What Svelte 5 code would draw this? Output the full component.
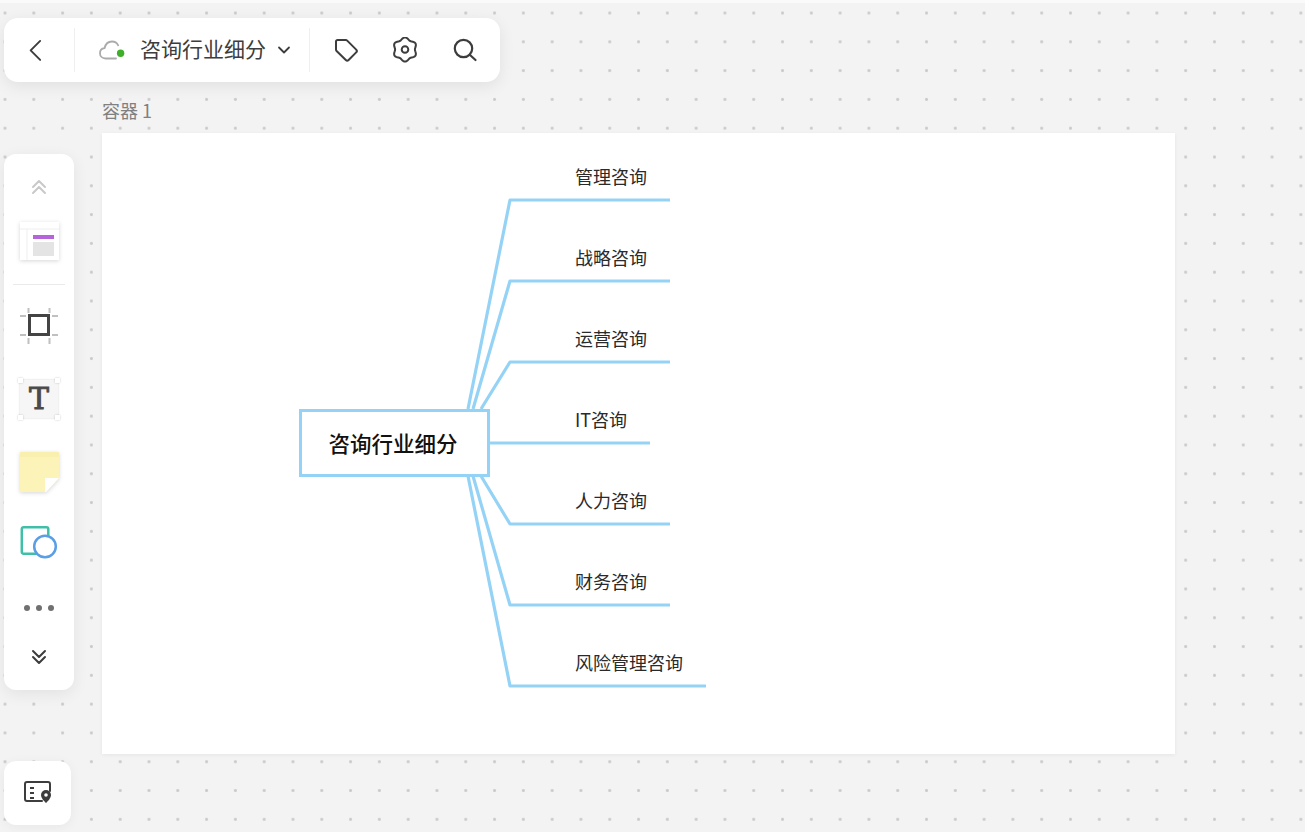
<script>
  const branches = [
    { label: '管理咨询', y: 200, sx: 468, ex: 670 },
    { label: '战略咨询', y: 281, sx: 473, ex: 670 },
    { label: '运营咨询', y: 362, sx: 481, ex: 670 },
    { label: 'IT咨询', y: 443, sx: 488, ex: 650 },
    { label: '人力咨询', y: 524, sx: 481, ex: 670 },
    { label: '财务咨询', y: 605, sx: 473, ex: 670 },
    { label: '风险管理咨询', y: 686, sx: 468, ex: 706 }
  ];
  const cardX = 102, cardY = 133;
  const path = (b) => {
    if (b.y === 443) return `M${b.sx - cardX} ${b.y - cardY}H${b.ex - cardX}`;
    const sy = b.y < 443 ? 409 : 476;
    return `M${b.sx - cardX} ${sy - cardY}L${510 - cardX} ${b.y - cardY}H${b.ex - cardX}`;
  };
  const gear = Array.from({ length: 73 }, (_, i) => {
    const t = (i * 5 * Math.PI) / 180;
    const r = 11 * (1 + 0.1 * Math.cos(6 * t));
    return `${(13 + r * Math.sin(t)).toFixed(2)},${(12.5 - r * Math.cos(t)).toFixed(2)}`;
  }).join(' ');
</script>

<div class="canvas">
  <div class="topline"></div>

  <div class="frame-title">容器 1</div>
  <div class="frame">
    <svg class="links" width="1073" height="621" viewBox="0 0 1073 621" fill="none">
      {#each branches as b}
        <path d={path(b)} stroke="#95d3f6" stroke-width="3.2" stroke-linejoin="round" />
      {/each}
    </svg>
    <div class="root">咨询行业细分</div>
    {#each branches as b}
      <div class="leaf" style="top: {b.y - cardY - 37}px">{b.label}</div>
    {/each}
  </div>

  <header class="topbar">
    <button class="tb back" aria-label="返回">
      <svg width="24" height="24" viewBox="0 0 24 24" fill="none" stroke="#3d3d3d" stroke-width="2" stroke-linecap="round" stroke-linejoin="round"><path d="M17 2 7 12l10 10" transform="translate(0 1) scale(.95)"/></svg>
    </button>
    <span class="sep"></span>
    <div class="doc">
      <svg class="cloud" width="28" height="20" viewBox="0 0 28 20" fill="none">
        <path d="M17 18.500H6.500C3.300 18.500 1 16.200 1 13.200 1 10.500 3 8.500 5.500 8.200 6.500 4 9.500 1.500 13 1.500c2.800 0 5 1.500 6.200 3.800" stroke="#ababab" stroke-width="1.800" stroke-linecap="round"/>
        <circle cx="21.600" cy="13.300" r="3.700" fill="#3fae29"/>
      </svg>
      <span class="doc-name">咨询行业细分</span>
      <svg class="caret" width="14" height="10" viewBox="0 0 14 10" fill="none" stroke="#3d3d3d" stroke-width="1.800" stroke-linecap="round" stroke-linejoin="round"><path d="M2 2.500 7 7.500l5-5"/></svg>
    </div>
    <span class="sep second"></span>
    <div class="actions">
      <button class="tb" aria-label="标签">
        <svg width="26" height="26" viewBox="0 0 26 26" fill="none" stroke="#3d3d3d" stroke-width="2" stroke-linejoin="round"><path d="M3 4.500A1.500 1.500 0 0 1 4.500 3h8.300a2 2 0 0 1 1.400.6l9 9a2 2 0 0 1 0 2.800l-7.600 7.600a2 2 0 0 1-2.800 0l-9.200-9a2 2 0 0 1-.6-1.400z"/></svg>
      </button>
      <button class="tb" aria-label="设置">
        <svg width="26" height="26" viewBox="0 0 26 26" fill="none" stroke="#3d3d3d" stroke-width="2" stroke-linejoin="round"><polygon points={gear}/><circle cx="13" cy="12.500" r="3.300"/></svg>
      </button>
      <button class="tb" aria-label="搜索">
        <svg width="26" height="26" viewBox="0 0 26 26" fill="none" stroke="#3d3d3d" stroke-width="2.200" stroke-linecap="round"><circle cx="11.500" cy="11.500" r="8.700"/><path d="m18 18 5.500 5"/></svg>
      </button>
    </div>
  </header>

  <aside class="toolbox">
    <button class="tool up" aria-label="上一页">
      <svg width="18" height="16" viewBox="0 0 18 16" fill="none" stroke="#c9c9c9" stroke-width="2" stroke-linecap="round" stroke-linejoin="round"><path d="M3 8l6-6 6 6M3 14l6-6 6 6"/></svg>
    </button>
    <button class="tool template" aria-label="模板">
      <svg class="soft" width="44" height="44" viewBox="0 0 44 44" fill="none">
        <rect x="3" y="2" width="39" height="38" fill="#fff"/>
        <path d="M3 9h39M10 9v31" stroke="#efefef"/>
        <rect x="16" y="15" width="21" height="4" fill="#b565d9"/>
        <rect x="16" y="22" width="21" height="14" fill="#e4e4e4"/>
      </svg>
    </button>
    <span class="tool-sep"></span>
    <button class="tool frame-tool" aria-label="容器">
      <svg width="40" height="40" viewBox="0 0 40 40" fill="none">
        <path d="M1 11h6M33 11h6M1 30h6M33 30h6M9.500 3v5M30.500 3v5M9.500 33v6M30.500 33v6" stroke="#c0c0c0" stroke-width="2"/>
        <rect x="10.500" y="10.500" width="19" height="19" stroke="#444" stroke-width="3" fill="#fff"/>
      </svg>
    </button>
    <button class="tool text-tool" aria-label="文本">
      <span class="t-box"><span class="t-letter">T</span><i class="c tl"></i><i class="c tr"></i><i class="c bl"></i><i class="c br"></i></span>
    </button>
    <button class="tool note" aria-label="便签">
      <svg class="soft" width="44" height="44" viewBox="0 0 44 44" fill="none">
        <path d="M3 4a1 1 0 0 1 1-1h37a1 1 0 0 1 1 1v25L29 43H4a1 1 0 0 1-1-1z" fill="#fbf3b8"/>
        <path d="M3 8V4a1 1 0 0 1 1-1h37a1 1 0 0 1 1 1v4z" fill="#f9efae"/>
        <path d="M28 29h14L29 43c-1 0-1-1-1-2z" fill="#fff"/>
      </svg>
    </button>
    <button class="tool shape" aria-label="形状">
      <svg width="40" height="36" viewBox="0 0 40 36" fill="none">
        <rect x="2.800" y="2.200" width="26.500" height="26.500" rx="1.800" fill="#fff" stroke="#3fbfa8" stroke-width="2.500"/>
        <circle cx="26" cy="21.500" r="10.800" fill="#fff" stroke="#5a9ee6" stroke-width="2.500"/>
      </svg>
    </button>
    <button class="tool more" aria-label="更多">
      <i></i><i></i><i></i>
    </button>
    <button class="tool down" aria-label="下一页">
      <svg width="16" height="16" viewBox="0 0 16 16" fill="none" stroke="#3d3d3d" stroke-width="2" stroke-linecap="round" stroke-linejoin="round"><path d="M2 2l6 6 6-6M2 8l6 6 6-6"/></svg>
    </button>
  </aside>

  <button class="mapbtn" aria-label="定位">
    <svg width="30" height="26" viewBox="0 0 30 26" fill="none">
      <path d="M19 21H4a2 2 0 0 1-2-2V4a2 2 0 0 1 2-2h21a2 2 0 0 1 2 2v7" stroke="#3d3d3d" stroke-width="2" stroke-linecap="round"/>
      <path d="M7 8h4M7 13h4M7 18h4" stroke="#3d3d3d" stroke-width="2"/>
      <path d="M23 10a5 5 0 0 1 5 5c0 3-3 6-5 8-2-2-5-5-5-8a5 5 0 0 1 5-5z" fill="#3d3d3d"/>
      <circle cx="23" cy="15" r="1.800" fill="#fff"/>
    </svg>
  </button>
</div>

<style>
  :global(body) {
    margin: 0;
    font-family: "Noto Sans CJK SC", "Noto Sans", sans-serif;
  }
  button {
    border: 0;
    padding: 0;
    background: none;
    display: flex;
    align-items: center;
    justify-content: center;
  }
  .canvas {
    position: relative;
    width: 1305px;
    height: 832px;
    overflow: hidden;
    background-color: #f3f3f3;
    background-image: radial-gradient(circle, #cbcbcb 0, #cbcbcb 1.200px, transparent 1.800px);
    background-size: 28.8px 28.8px;
    background-position: -9.400px -1.400px;
  }
  .topline {
    height: 3px;
    background: #fafafa;
  }
  .frame-title {
    position: absolute;
    left: 102px;
    top: 97px;
    font-size: 18px;
    line-height: 26px;
    color: #808080;
  }
  .frame {
    position: absolute;
    left: 102px;
    top: 133px;
    width: 1073px;
    height: 621px;
    background: #fff;
    box-shadow: 0 1px 4px rgba(0, 0, 0, .06);
  }
  .links {
    position: absolute;
    inset: 0;
  }
  .root {
    position: absolute;
    left: 196.500px;
    top: 275.500px;
    width: 191px;
    height: 68px;
    box-sizing: border-box;
    border: 3.500px solid #95d3f6;
    background: #fff;
    display: flex;
    align-items: center;
    justify-content: center;
    font-size: 21.500px;
    font-weight: 500;
    color: #111;
    white-space: nowrap;
    padding-right: 2px;
  }
  .leaf {
    position: absolute;
    left: 473px;
    font-size: 18px;
    line-height: 26px;
    color: #2a2a2a;
    white-space: nowrap;
  }
  .topbar {
    position: absolute;
    left: 4px;
    top: 18px;
    width: 496px;
    height: 64px;
    box-sizing: border-box;
    background: #fff;
    border-radius: 14px;
    box-shadow: 0 4px 16px rgba(0, 0, 0, .08);
    display: flex;
    align-items: center;
  }
  .tb {
    width: 26px;
    height: 26px;
  }
  .back {
    margin-left: 20px;
    width: 24px;
  }
  .sep {
    width: 1px;
    height: 44px;
    background: #efefef;
    margin-left: 26px;
  }
  .sep.second {
    margin-left: 18px;
  }
  .doc {
    display: flex;
    align-items: center;
    margin-left: 24px;
  }
  .cloud {
    margin-right: 13px;
  }
  .doc-name {
    font-size: 21px;
    line-height: 28px;
    color: #3d3d3d;
    white-space: nowrap;
    margin-bottom: 4px;
  }
  .caret {
    margin-left: 11px;
  }
  .actions {
    display: flex;
    gap: 33.500px;
    margin-left: 22.500px;
  }
  .toolbox {
    position: absolute;
    left: 4px;
    top: 154px;
    width: 70px;
    height: 536px;
    background: #fff;
    border-radius: 12px;
    box-shadow: 0 4px 16px rgba(0, 0, 0, .07);
    display: flex;
    flex-direction: column;
    align-items: center;
  }
  .tool {
    width: 70px;
    flex: none;
  }
  .soft {
    filter: drop-shadow(0 1px 2px rgba(0, 0, 0, .16));
  }
  .up {
    height: 16px;
    margin-top: 25px;
  }
  .template {
    height: 44px;
    margin-top: 25px;
  }
  .tool-sep {
    width: 52px;
    height: 1px;
    background: #eaeaea;
    margin-top: 20px;
    flex: none;
  }
  .frame-tool {
    height: 40px;
    margin-top: 20px;
  }
  .text-tool {
    height: 44px;
    margin-top: 32px;
  }
  .t-box {
    position: relative;
    width: 38px;
    height: 38px;
    background: #f6f6f6;
    box-shadow: 0 0 2px rgba(0, 0, 0, .18);
    display: flex;
    align-items: center;
    justify-content: center;
  }
  .t-letter {
    font-family: "DejaVu Serif", "Liberation Serif", serif;
    font-size: 30px;
    line-height: 1;
    color: #4a4a4a;
    -webkit-text-stroke: .9px #4a4a4a;
  }
  .c {
    position: absolute;
    width: 5px;
    height: 5px;
    background: #fff;
    box-shadow: 0 0 2px rgba(0, 0, 0, .25);
  }
  .tl { left: -2px; top: -2px; }
  .tr { right: -2px; top: -2px; }
  .bl { left: -2px; bottom: -2px; }
  .br { right: -2px; bottom: -2px; }
  .note {
    height: 44px;
    margin-top: 28px;
  }
  .shape {
    height: 36px;
    margin-top: 32px;
  }
  .more {
    height: 8px;
    margin-top: 43px;
    gap: 6px;
  }
  .more i {
    width: 6px;
    height: 6px;
    border-radius: 50%;
    background: #707070;
  }
  .down {
    height: 16px;
    margin-top: 37px;
  }
  .mapbtn {
    position: absolute;
    left: 4px;
    top: 761px;
    width: 67px;
    height: 64px;
    background: #fff;
    border-radius: 12px;
    box-shadow: 0 2px 12px rgba(0, 0, 0, .05);
  }
</style>
